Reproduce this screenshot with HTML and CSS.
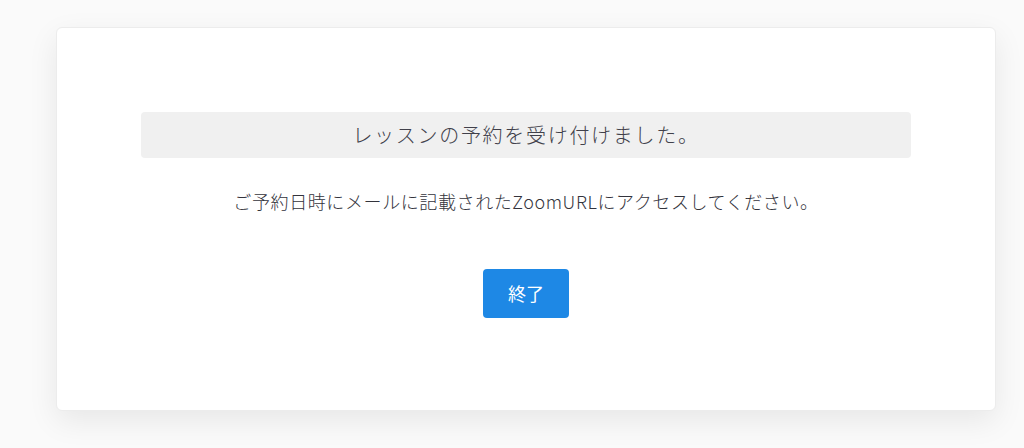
FILE: index.html
```html
<!DOCTYPE html>
<html lang="ja">
<head>
<meta charset="utf-8">
<link rel="stylesheet" href="styles.css">
</head>
<body>
<div class="page">
  <div class="card">
    <div class="notice">レッスンの予約を受け付けました。</div>
    <p class="message">ご予約日時にメールに記載されたZoomURLにアクセスしてください。</p>
    <div class="actions"><button class="btn">終了</button></div>
  </div>
</div>
</body>
</html>
```
FILE: styles.css
```css
html, body { margin: 0; padding: 0; }
body {
  background: #fafafa;
  font-family: "Noto Sans CJK JP", "Noto Sans", sans-serif;
  height: 448px;
  overflow: hidden;
}
.page {
  padding: 27px 28px 0 56px;
}
.card {
  box-sizing: border-box;
  width: 940px;
  height: 384px;
  background: #fff;
  border: 1px solid #ececec;
  border-radius: 6px;
  box-shadow: 0 10px 30px rgba(0,0,0,0.08);
  padding: 84px 84px 0 84px;
}
.notice {
  height: 46px;
  background: #f0f0f0;
  border-radius: 4px;
  display: flex;
  align-items: center;
  justify-content: center;
  font-size: 20px;
  font-weight: 300;
  color: #40404a;
  letter-spacing: 1.7px;
  padding-bottom: 2px;
  box-sizing: border-box;
}
.message {
  margin: 22px 0 0 0;
  text-align: center;
  font-size: 18px;
  font-weight: 300;
  line-height: 42px;
  letter-spacing: 0.6px;
  color: #33333c;
}
.actions {
  display: flex;
  justify-content: center;
  margin-top: 47px;
}
.btn {
  width: 86px;
  height: 49px;
  border: none;
  border-radius: 4px;
  background: #1e88e5;
  color: #fff;
  font-family: inherit;
  font-size: 18px;
  padding-bottom: 2px;
}
```
